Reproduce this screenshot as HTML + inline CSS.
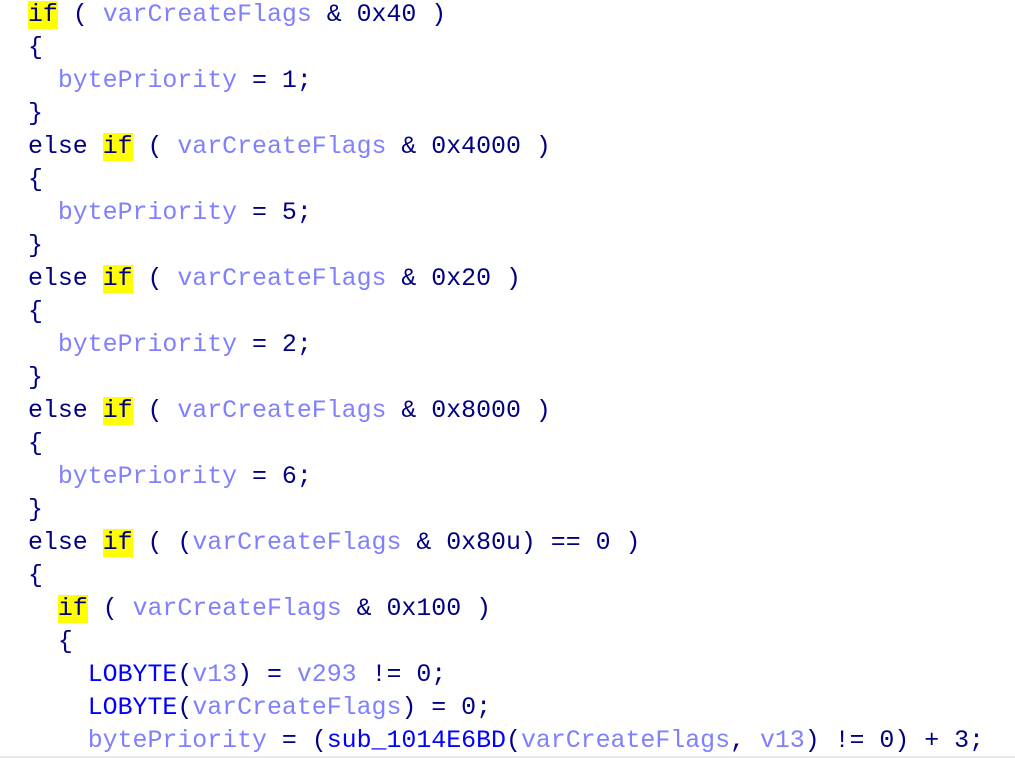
<!DOCTYPE html><html><head><style>
html,body{margin:0;padding:0;background:#fff;width:1015px;height:759px;overflow:hidden}
pre{margin:0;position:absolute;left:28px;top:-1px;font-family:"Liberation Mono",monospace;font-size:24.9px;line-height:33px;color:#000080}
.v{color:#8080ff}.f{color:#0000ff}.k{background:#ffff00}
.bar{position:absolute;left:0;top:756px;width:1015px;height:2px;background:#e8e8e8}
</style></head><body><pre><span class="k">if</span> ( <span class="v">varCreateFlags</span> &amp; 0x40 )
{
  <span class="v">bytePriority</span> = 1;
}
else <span class="k">if</span> ( <span class="v">varCreateFlags</span> &amp; 0x4000 )
{
  <span class="v">bytePriority</span> = 5;
}
else <span class="k">if</span> ( <span class="v">varCreateFlags</span> &amp; 0x20 )
{
  <span class="v">bytePriority</span> = 2;
}
else <span class="k">if</span> ( <span class="v">varCreateFlags</span> &amp; 0x8000 )
{
  <span class="v">bytePriority</span> = 6;
}
else <span class="k">if</span> ( (<span class="v">varCreateFlags</span> &amp; 0x80u) == 0 )
{
  <span class="k">if</span> ( <span class="v">varCreateFlags</span> &amp; 0x100 )
  {
    <span class="f">LOBYTE</span>(<span class="v">v13</span>) = <span class="v">v293</span> != 0;
    <span class="f">LOBYTE</span>(<span class="v">varCreateFlags</span>) = 0;
    <span class="v">bytePriority</span> = (<span class="f">sub_1014E6BD</span>(<span class="v">varCreateFlags</span>, <span class="v">v13</span>) != 0) + 3;
</pre><div class="bar"></div></body></html>
